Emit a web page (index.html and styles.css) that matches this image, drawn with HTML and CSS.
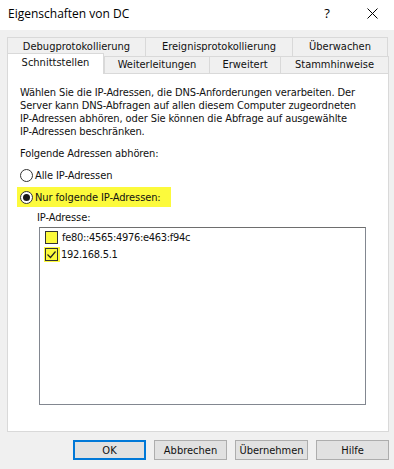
FILE: index.html
```html
<!DOCTYPE html>
<html lang="de">
<head>
<meta charset="utf-8">
<title>Eigenschaften von DC</title>
<link rel="stylesheet" href="styles.css">
</head>
<body>
<div class="window">
  <div class="titlebar">
    <span class="title">Eigenschaften von DC</span>
    <span class="help">?</span>
    <span class="close"><svg width="11" height="11" viewBox="0 0 11 11"><path d="M0.5 0.5 L10.5 10.5 M10.5 0.5 L0.5 10.5" stroke="#000" stroke-width="1" fill="none"/></svg></span>
  </div>
  <div class="body">
    <div class="tabrow back">
      <div class="tab w1">Debugprotokollierung</div>
      <div class="tab w2">Ereignisprotokollierung</div>
      <div class="tab w3">Überwachen</div>
    </div>
    <div class="tabrow front">
      <div class="tab sel w4">Schnittstellen</div>
      <div class="tab w5">Weiterleitungen</div>
      <div class="tab w6">Erweitert</div>
      <div class="tab w7">Stammhinweise</div>
    </div>
    <div class="panel">
      <p class="desc">Wählen Sie die IP-Adressen, die DNS-Anforderungen verarbeiten. Der Server kann DNS-Abfragen auf allen diesem Computer zugeordneten <span class="nw">IP-Adressen</span> abhören, oder Sie können die Abfrage auf ausgewählte <span class="nw">IP-Adressen</span> beschränken.</p>
      <p class="label">Folgende Adressen abhören:</p>
      <div class="radio"><span class="circle"></span><span>Alle IP-Adressen</span></div>
      <div class="radio hl"><span class="circle on"></span><span>Nur folgende IP-Adressen:</span></div>
      <p class="label sub">IP-Adresse:</p>
      <div class="listbox">
        <div class="item"><span class="cb"></span><span class="ip">fe80::4565:4976:e463:f94c</span></div>
        <div class="item"><span class="cbwrap"><span class="cb checked"><svg width="11" height="11" viewBox="0 0 11 11"><path d="M1.5 5.5 L4.5 8.5 L9.5 2.5" stroke="#222" stroke-width="1.2" fill="none"/></svg></span></span><span class="ip">192.168.5.1</span></div>
      </div>
    </div>
    <div class="buttons">
      <div class="btn default">OK</div>
      <div class="btn">Abbrechen</div>
      <div class="btn">Übernehmen</div>
      <div class="btn">Hilfe</div>
    </div>
  </div>
</div>
</body>
</html>
```

FILE: styles.css
```css
html, body {
  margin: 0;
  padding: 0;
}
body {
  width: 394px;
  height: 469px;
  overflow: hidden;
  background: #f0f0f0;
  font-family: "DejaVu Sans Condensed", "Liberation Sans", sans-serif;
  font-size: 11px;
  color: #000;
}
.window {
  display: flex;
  flex-direction: column;
  height: 469px;
}
.titlebar {
  height: 30px;
  background: #fff;
  display: flex;
  align-items: center;
  padding-bottom: 4px;
  box-sizing: border-box;
  font-family: "Open Sans", "Liberation Sans", sans-serif;
  font-size: 12px;
}
.title {
  margin-left: 8px;
  flex: 1;
}
.help {
  width: 12px;
  text-align: center;
  margin-right: 34px;
  font-size: 13px;
}
.close {
  display: flex;
  margin-right: 16px;
}
.body {
  flex: 1;
  display: flex;
  flex-direction: column;
  padding: 7px 5px 0 7px;
}
.tabrow {
  display: flex;
}
.tab {
  box-sizing: border-box;
  border: 1px solid #d9d9d9;
  border-bottom: none;
  margin-right: -1px;
  background: #f0f0f0;
  text-align: center;
  font-family: "DejaVu Sans Condensed", sans-serif;
  font-size: 11px;
  color: #111;
}
.back .tab {
  height: 19px;
  line-height: 18px;
}
.front {
  height: 17px;
  align-items: flex-end;
}
.front .tab {
  height: 17px;
  line-height: 15px;
}
.front .tab.sel {
  height: 21px;
  line-height: 18px;
  background: #fff;
  margin-bottom: -1px;
  position: relative;
  z-index: 2;
  margin-right: 0;
}
.w1 { width: 139px; }
.w2 { width: 148px; }
.w3 { width: 96px; }
.w4 { width: 97px; }
.w5 { width: 106px; }
.w6 { width: 72px; }
.w7 { width: 109px; }
.panel {
  position: relative;
  z-index: 1;
  width: 382px;
  height: 359px;
  box-sizing: border-box;
  background: #fff;
  border: 1px solid #d9d9d9;
  padding: 12px 12px 0 12px;
  display: flex;
  flex-direction: column;
  letter-spacing: -0.1px;
  color: #111;
}
p {
  margin: 0;
}
.desc {
  line-height: 13px;
  width: 345px;
}
.nw {
  white-space: nowrap;
}
.label {
  line-height: 13px;
  margin-top: 9px;
}
.radio {
  height: 20px;
  display: flex;
  align-items: center;
  gap: 2px;
  margin-top: 2px;
  align-self: flex-start;
}
.label + .radio {
  margin-top: 5px;
}
.radio.hl {
  background: #fcfa3c;
  margin-left: -3px;
  padding-left: 3px;
  width: 151px;
}
.circle {
  width: 13px;
  height: 13px;
  box-sizing: border-box;
  border: 1px solid #333;
  border-radius: 50%;
  background: #fff;
  display: flex;
  align-items: center;
  justify-content: center;
}
.circle.on::after {
  content: "";
  width: 7px;
  height: 7px;
  border-radius: 50%;
  background: #1a1a1a;
}
.label.sub {
  margin-left: 17px;
  margin-top: 4px;
}
.listbox {
  margin-left: 19px;
  margin-top: 3px;
  width: 327px;
  height: 178px;
  box-sizing: border-box;
  border: 1px solid #828790;
  border-top-color: #6e6e6e;
  background: #fff;
  padding-top: 1px;
}
.item {
  height: 17px;
  display: flex;
  align-items: center;
  padding-left: 5px;
  gap: 4px;
}
.ip {
  letter-spacing: -0.3px;
}
.cb {
  width: 13px;
  height: 13px;
  box-sizing: border-box;
  border: 1px solid #333;
  background: #fcfa3c;
  display: flex;
  align-items: center;
  justify-content: center;
}
.cbwrap {
  display: flex;
  background: #fcfa3c;
  margin: -1px -3px -1px -1px;
  padding: 1px 2px 1px 1px;
}
.cb.checked {
  background: #fcfa3c;
}
.buttons {
  display: flex;
  justify-content: flex-end;
  gap: 8px;
  margin-top: 8px;
}
.btn {
  width: 73px;
  height: 20px;
  box-sizing: border-box;
  border: 1px solid #adadad;
  background: #e1e1e1;
  display: flex;
  align-items: center;
  justify-content: center;
  font-family: "DejaVu Sans Condensed", sans-serif;
  font-size: 11px;
  color: #111;
}
.btn.default {
  border: 2px solid #0078d7;
}
```
